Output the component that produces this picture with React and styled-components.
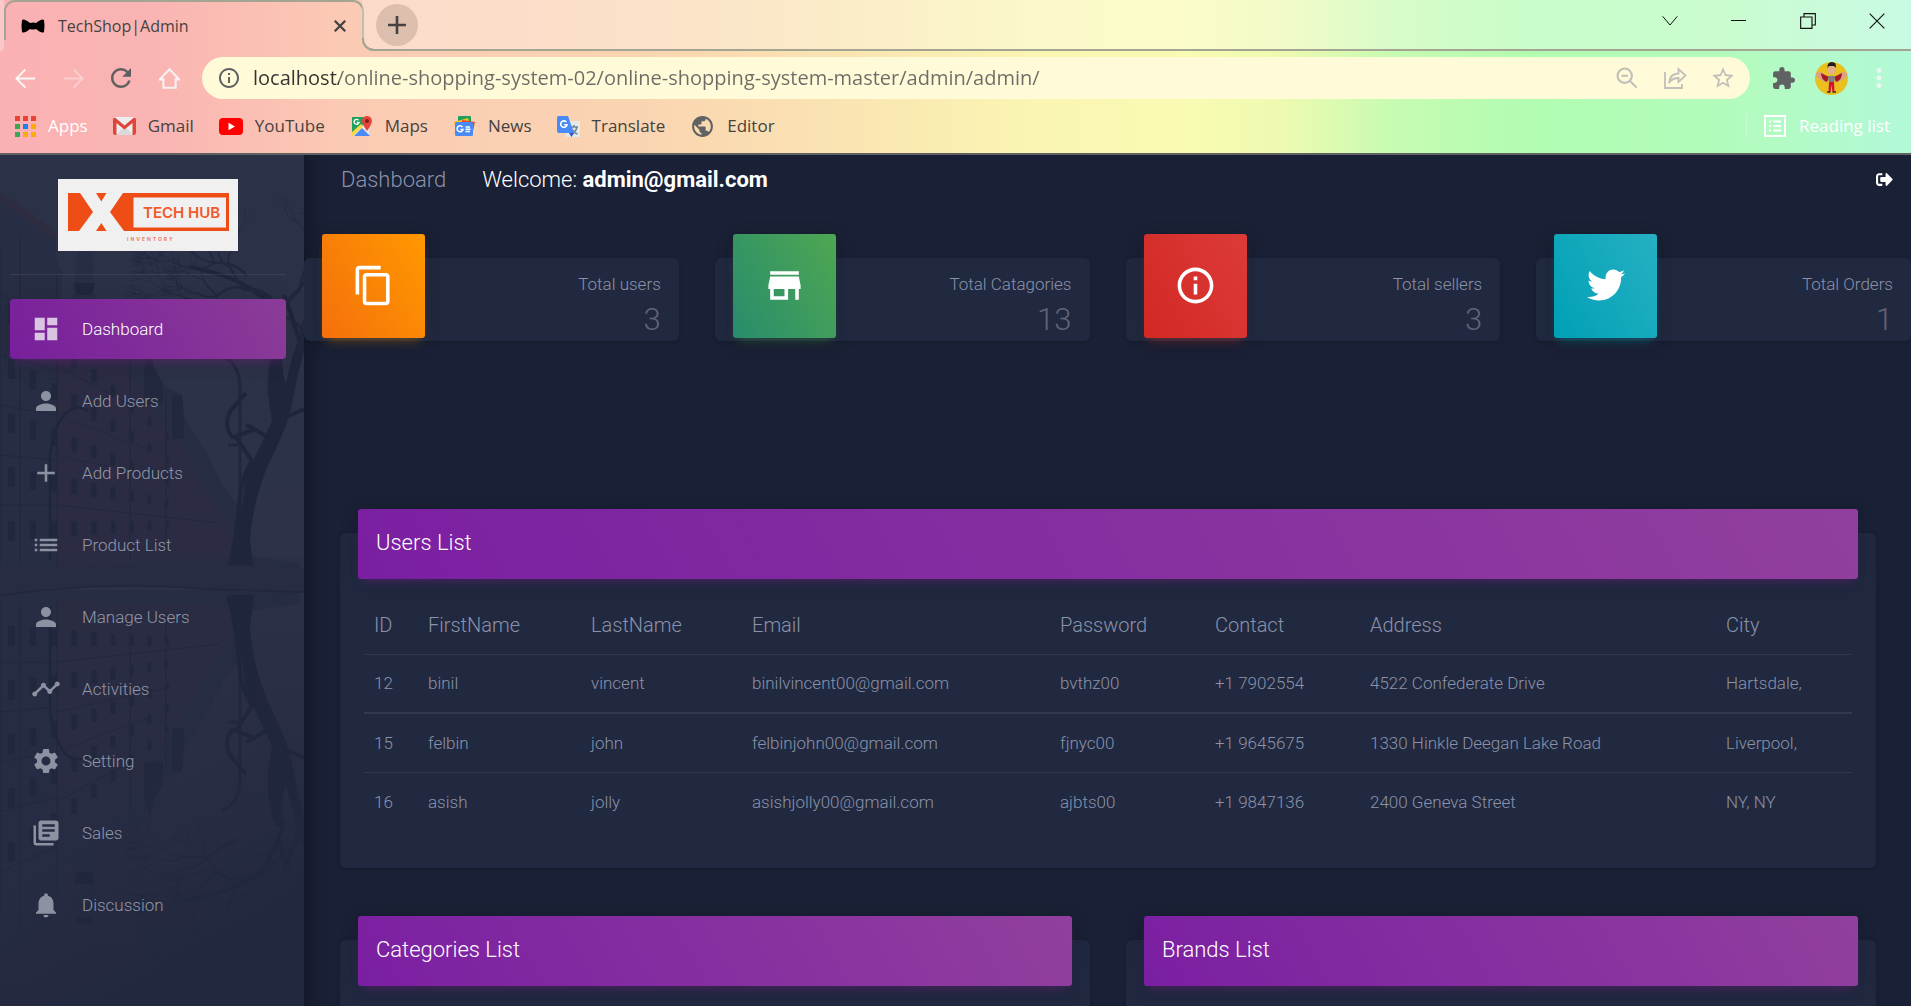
import React from "react";
import styled, { createGlobalStyle, css } from "styled-components";
import {
  MdDashboard, MdPerson, MdAdd, MdList, MdTimeline, MdSettings, MdLibraryBooks,
  MdNotifications, MdContentCopy, MdStore, MdInfoOutline, MdExtension, MdMoreVert,
  MdRefresh, MdStarBorder, MdPublic,
} from "react-icons/md";
import { FaTwitter, FaSignOutAlt } from "react-icons/fa";

const Global = createGlobalStyle`
  *, *::before, *::after { box-sizing: border-box; }
  body { margin: 0; background: #1a2035; }
  button, input { font: inherit; color: inherit; }
  button { background: none; border: 0; padding: 0; display: grid; place-items: center; }
  a { color: inherit; text-decoration: none; }
  svg { display: block; flex: none; }
`;

const ui = `"Open Sans", "Noto Sans", sans-serif`;
const line = "#a3a491";

const Shell = styled.div`
  height: 100vh;
  display: flex;
  flex-direction: column;
  overflow: hidden;
  font-family: Roboto, "Liberation Sans", sans-serif;
`;

/* ---------- browser frame ---------- */

const Browser = styled.header`
  flex: none;
  font-family: ${ui};
  color: #45423f;
  border-bottom: 2px solid #5f6163;
  background: linear-gradient(90deg, #fab1b3 0%, #fab4b3 8%, #fbcab4 18%, #fad5b1 34%, #fae4b2 44%,
    #faf5b2 54%, #f9fbb2 62%, #eefab0 67%, #c6fbb2 73%, #b2fcb2 80%, #b3fbbb 90%, #b2f9d8 100%);
`;

const TabStrip = styled.div`
  height: 51px;
  display: flex;
  align-items: flex-start;
`;

const StripEdge = styled.div`
  width: 4px;
  height: 51px;
  background: rgba(255, 255, 255, 0.3);
  border-bottom-right-radius: 12px;
`;

const Tab = styled.div`
  width: 360px;
  height: 40px;
  padding: 9px 15px 0 15px;
  display: flex;
  align-items: center;
  gap: 13px;
  border: 2px solid ${line};
  border-bottom: 0;
  border-radius: 11px 11px 0 0;
  font-size: 16px;
  line-height: 24px;
`;

const TabTitle = styled.span`
  flex: 1;
`;

const StripRest = styled.div`
  position: relative;
  flex: 1;
  height: 51px;
  margin-left: -2px;
  padding: 0 0 8px 14px;
  display: flex;
  align-items: center;
  background: rgba(255, 255, 255, 0.3);
  border-bottom: 2px solid ${line};
  border-bottom-left-radius: 12px;

  &::before {
    content: "";
    position: absolute;
    left: 0;
    bottom: -2px;
    width: 12px;
    height: 13px;
    border-left: 2px solid ${line};
    border-bottom: 2px solid ${line};
    border-bottom-left-radius: 12px;
  }
`;

const NewTab = styled.button`
  width: 42px;
  height: 42px;
  margin-top: 8px;
  border-radius: 50%;
  background: rgba(165, 140, 125, 0.36);
`;

const WindowControls = styled.div`
  display: flex;
  margin-left: auto;
`;

const WindowButton = styled.button`
  width: 69px;
  height: 42px;
  color: #111;
`;

const Toolbar = styled.div`
  display: flex;
  align-items: center;
  height: 54px;
`;

const ToolButton = styled.button`
  width: 48px;
  height: 42px;
  color: ${(p) => p.$color || "#5f5f5f"};
`;

const NavButtons = styled.div`
  display: flex;
  width: 202px;
  padding-left: 1px;
`;

const Omnibox = styled.div`
  flex: 1;
  height: 42px;
  display: flex;
  align-items: center;
  padding-left: 15px;
  padding-right: 3px;
  border-radius: 21px;
  background: #fffbd9;
`;

const Address = styled.input`
  flex: 1;
  min-width: 0;
  margin-left: 12px;
  padding: 0;
  border: 0;
  outline: 0;
  font-size: 20px;
  line-height: 32px;
  color: #6d6b66;
  background: linear-gradient(90deg, #33322f 0 86px, #6d6b66 86px);
  -webkit-background-clip: text;
  background-clip: text;
  -webkit-text-fill-color: transparent;
`;

const ExtensionRow = styled.div`
  display: flex;
  padding: 0 8px 0 9px;
`;

const Avatar = styled.svg`
  border-radius: 50%;
`;

const Bookmarks = styled.nav`
  display: flex;
  align-items: center;
  gap: 25px;
  height: 48px;
  padding: 0 21px 6px 14px;
  font-size: 17px;
  line-height: 24px;
`;

const Bookmark = styled.a`
  display: flex;
  align-items: center;
  gap: 12px;
  color: ${(p) => (p.$light ? "#fff" : "inherit")};
  ${(p) => p.$end && css`
    margin-left: auto;
    padding-left: 16px;
    border-left: 1px solid rgba(255, 255, 255, 0.3);
  `}
`;

/* ---------- page ---------- */

const Page = styled.div`
  flex: 1;
  min-height: 0;
  display: flex;
  background: #1a2035;
`;

const Sidebar = styled.aside`
  position: relative;
  z-index: 0;
  flex: none;
  width: 304px;
  overflow: hidden;
  padding: 24px 18px 0 10px;
  background: #242a41;
`;

const Scene = styled.svg`
  position: absolute;
  inset: 0;
  z-index: -1;
  width: 100%;
  height: 100%;
`;

const Brand = styled.a`
  display: flex;
  justify-content: center;
  padding-bottom: 23px;
  border-bottom: 1px solid rgba(180, 180, 180, 0.12);
`;

const Menu = styled.nav`
  display: flex;
  flex-direction: column;
  gap: 12px;
  padding-top: 24px;
`;

const MenuLink = styled.a`
  display: flex;
  align-items: center;
  gap: 21px;
  height: 60px;
  padding-left: 21px;
  border-radius: 4px;
  font-size: 17px;
  font-weight: 300;
  line-height: 36px;
  color: ${(p) => (p.$active ? "#fff" : "#9297a8")};
  ${(p) => p.$active && css`
    background: linear-gradient(60deg, #781f9c, #8b3c97);
    box-shadow: 0 4px 20px 0 rgba(0, 0, 0, 0.14), 0 7px 10px -5px rgba(156, 39, 176, 0.4);
  `}

  svg { color: ${(p) => (p.$active ? "#d9c5e2" : "#8d92a3")}; }
`;

const Main = styled.main`
  flex: 1;
  min-width: 0;
  overflow-y: auto;
  scrollbar-width: none;
  color: #8b92a9;
  box-shadow: inset 18px 0 18px -14px rgba(0, 0, 0, 0.3);
`;

const TopBar = styled.div`
  display: flex;
  align-items: center;
  gap: 36px;
  height: 49px;
  padding: 0 18px 0 37px;
  font-size: 22px;
  font-weight: 300;
  line-height: 30px;
  color: #8b92a9;
`;

const Welcome = styled.span`
  color: #fff;
  b { font-weight: 700; }
`;

const LogoutButton = styled.button`
  margin-left: auto;
  color: #fff;
`;

const Stats = styled.section`
  display: grid;
  grid-template-columns: repeat(4, 1fr);
  gap: 36px;
  padding-top: 54px;
`;

const surface = css`
  background: #202940;
  border-radius: 6px;
  box-shadow: 0 1px 4px 0 rgba(0, 0, 0, 0.14);
`;

const StatCard = styled.article`
  ${surface}
  display: flex;
  justify-content: space-between;
  height: 83px;
  padding: 0 18px;
`;

const StatIcon = styled.div`
  display: grid;
  place-items: center;
  width: 103px;
  height: 104px;
  margin-top: -24px;
  padding-bottom: 2px;
  border-radius: 3px;
  color: #fff;
  background: linear-gradient(60deg, ${(p) => p.$from}, ${(p) => p.$to});
  box-shadow: 0 4px 20px 0 rgba(0, 0, 0, 0.14), 0 7px 10px -5px ${(p) => p.$glow};
`;

const StatText = styled.div`
  padding-top: 11px;
  text-align: right;
  font-weight: 300;
`;

const StatLabel = styled.p`
  margin: 0;
  font-size: 17px;
  line-height: 30px;
`;

const StatValue = styled.h3`
  margin: 0;
  font-size: 31px;
  font-weight: 300;
  line-height: 42px;
  color: #606477;
`;

const Lists = styled.section`
  display: grid;
  grid-template-columns: 1fr 1fr;
  gap: 72px 36px;
  padding: 192px 35px 36px 36px;
`;

const Panel = styled.article`
  ${surface}
  grid-column: ${(p) => (p.$wide ? "1 / -1" : "auto")};
  min-height: 240px;
  padding: 0 18px 37px;
`;

const PanelHeader = styled.h4`
  height: 70px;
  margin: -24px 0 0;
  padding: 18px;
  border-radius: 3px;
  font-size: 22px;
  font-weight: 300;
  line-height: 32px;
  color: #fff;
  background: linear-gradient(60deg, #7b1fa2, #913f9e);
  box-shadow: 0 4px 20px 0 rgba(0, 0, 0, 0.14), 0 7px 10px -5px rgba(156, 39, 176, 0.4);
`;

const TableArea = styled.div`
  padding: 17px 6px 0;
`;

const Table = styled.table`
  width: 100%;
  table-layout: fixed;
  border-collapse: collapse;
  font-weight: 300;

  th, td {
    padding: 0 10px;
    text-align: left;
    white-space: nowrap;
    font-weight: 300;
  }
  th { height: 58px; font-size: 20px; }
  td { height: 59px; font-size: 17px; border-top: 1px solid #313951; }
  tbody tr:nth-child(2) td { border-top-width: 2px; }
`;

/* ---------- drawings ---------- */

const Stroke = ({ size = 24, w = 2, children }) => (
  <svg width={size} height={size} viewBox="0 0 24 24" fill="none" stroke="currentColor" strokeWidth={w}>{children}</svg>
);

const BowTie = () => (
  <svg width="24" height="16" viewBox="0 0 24 16" fill="#000">
    <path d="M1 2Q3 0 9 5Q12 4 15 5Q21 0 23 2Q24 8 23 14Q21 16 15 11Q12 12 9 11Q3 16 1 14Q0 8 1 2Z" />
  </svg>
);

const AppsGrid = () => {
  const colors = ["#ea4335", "#ea4335", "#ea4335", "#34a853", "#1a83f0", "#fbab04", "#34a853", "#fbab04", "#fbab04"];
  return (
    <svg width="22" height="22" viewBox="0 0 22 22">
      {colors.map((c, i) => (
        <rect key={i} x={1 + (i % 3) * 8} y={1 + Math.floor(i / 3) * 8} width="5" height="5" fill={c} />
      ))}
    </svg>
  );
};

const Gmail = () => (
  <svg width="23" height="18" viewBox="0 0 23 18">
    <rect width="23" height="18" rx="2" fill="#ededed" />
    <path d="M3 18L11.500 9L20 18Z" fill="#d8d8d8" />
    <path d="M0 2.500Q0 .5 2 .5L11.500 8.500L21 .5Q23 .5 23 2.500V16Q23 18 21 18H19.500V6L11.500 12.500L3.500 6V18H2Q0 18 0 16Z" fill="#e0443a" />
  </svg>
);

const YouTube = () => (
  <svg width="24" height="17" viewBox="0 0 24 17">
    <rect width="24" height="17" rx="4" fill="#f00" />
    <path d="M9.500 4.800L16 8.500L9.500 12.200Z" fill="#fff" />
  </svg>
);

const Maps = () => (
  <svg width="23" height="23" viewBox="0 0 23 23">
    <path d="M2 2H19V21H2Z" fill="#e8e8e8" />
    <path d="M2 2H17L13 10L2 19Z" fill="#1fa15d" />
    <path d="M2 17L11 9L13 11L3 21H2Z" fill="#fdd63b" />
    <path d="M4 21L12 13L20 21Z" fill="#4a8af4" />
    <path d="M17 1A5 5 0 0 1 22 6Q22 9 17 16Q12 9 12 6A5 5 0 0 1 17 1Z" fill="#e5443a" />
    <circle cx="17" cy="6" r="2" fill="#7c1f19" />
    <path d="M8.500 5.200A2.500 2.500 0 1 0 9 7.500H6.800" fill="none" stroke="#fff" strokeWidth="1.300" />
  </svg>
);

const News = () => (
  <svg width="23" height="22" viewBox="0 0 23 22">
    <rect x="5" y="1" width="13" height="10" rx="1" fill="#1fa15d" />
    <path d="M1 7L15 3L17 10L3 15Z" fill="#fdbf10" />
    <path d="M9 5L22 7L20 16L8 14Z" fill="#e5443a" />
    <rect x="2" y="7" width="18" height="14" rx="1.500" fill="#4a8af4" />
    <path d="M9.500 12A3 3 0 1 0 10 14.500H7.500M12.500 12H17M12.500 14.300H17.500M12.500 16.600H17" fill="none" stroke="#fff" strokeWidth="1.500" />
  </svg>
);

const Translate = () => (
  <svg width="23" height="23" viewBox="0 0 23 23">
    <rect x="9" y="6" width="14" height="16" rx="1" fill="#e6e8ea" />
    <path d="M13 12H21M17 10V12M20 12Q19 17 14 19M15 14Q17 18 20.500 19" stroke="#6d8799" strokeWidth="1.500" fill="none" />
    <path d="M1.500 1H11L17 18H2Q0 18 0 16V3Q0 1 1.500 1Z" fill="#4a8af4" />
    <path d="M12 18H17L14.500 22Z" fill="#2b56c4" />
    <path d="M9.300 7A3.200 3.200 0 1 0 10 9.800H7.200" fill="none" stroke="#fff" strokeWidth="1.600" />
  </svg>
);

const ReadingIcon = () => (
  <Stroke size={24} w={2}>
    <path d="M2 2H22V22H2Z" />
    <path d="M6 7.500H8M10 7.500H18M6 12H8M10 12H18M6 16.500H8M10 16.500H18" />
  </Stroke>
);

const AvatarPicture = () => (
  <Avatar width="33" height="33" viewBox="0 0 33 33">
    <rect width="33" height="33" fill="#eac01f" />
    <path d="M0 12Q4 8 9 12L14 18L11 20Q3 18 0 12Z" fill="#d9a38b" />
    <path d="M33 12Q29 8 24 12L19 18L22 20Q30 18 33 12Z" fill="#d9a38b" />
    <path d="M6 11L14 15L12 20Q6 18 6 11Z" fill="#a81a20" />
    <path d="M27 11L19 15L21 20Q27 18 27 11Z" fill="#a81a20" />
    <path d="M13 14H20L19 21H14Z" fill="#7b7f86" />
    <path d="M14 20H19L19.500 30H17.500L16.500 23L15.500 30H13.500Z" fill="#d3122f" />
    <ellipse cx="16.500" cy="8" rx="3.500" ry="4.500" fill="#e2ae93" />
    <path d="M12.500 6Q12 0 17 0Q22 0 20.500 6L19 4H14Z" fill="#231c1a" />
    <path d="M12 30H15.500M17.500 30H21" stroke="#333" strokeWidth="1.500" />
  </Avatar>
);

const Logo = () => (
  <svg width="180" height="72" viewBox="0 0 180 72" role="img" aria-label="Tech Hub Inventory">
    <rect width="180" height="72" fill="#f1f0f1" />
    <g fill="#ee4e16">
      <path d="M10 14H22L35 33L21 52H10Z" />
      <path d="M38 14H48.500L43.300 22.500Z" />
      <path d="M38 52H48.500L43.300 44Z" />
      <path fillRule="evenodd" d="M65 14H171V52H66L52 33ZM75.500 18.500V48.500H168V18.500Z" />
      <text x="85" y="39" fontFamily="Inter, sans-serif" fontWeight="600" fontSize="15" fill="#f0592a">TECH HUB</text>
      <text x="69" y="62" fontFamily="Inter, sans-serif" fontWeight="700" fontSize="5" letterSpacing="2" fill="#ea7f66">INVENTORY</text>
    </g>
  </svg>
);

/* Bare branches are grown recursively; the same seed always gives the same tree. */
function growBranches(x, y, angle, length, width, depth, out, rand) {
  if (depth === 0) return;
  const bend = (rand() - 0.5) * 0.7;
  const x2 = x + Math.cos(angle + bend) * length;
  const y2 = y + Math.sin(angle + bend) * length;
  const cx = x + Math.cos(angle - bend) * length * 0.5;
  const cy = y + Math.sin(angle - bend) * length * 0.5;
  out.push({ d: `M${x.toFixed(1)} ${y.toFixed(1)}Q${cx.toFixed(1)} ${cy.toFixed(1)} ${x2.toFixed(1)} ${y2.toFixed(1)}`, w: width });
  const forks = rand() > 0.5 ? 3 : 2;
  for (let i = 0; i < forks; i += 1) {
    growBranches(x2, y2, angle + bend + (i - (forks - 1) / 2) * 0.65 + (rand() - 0.5) * 0.4,
      length * 0.78, width * 0.62, depth - 1, out, rand);
  }
}

function makeTree() {
  let seed = 11;
  const rand = () => {
    seed = (seed * 16807) % 2147483647;
    return seed / 2147483647;
  };
  const out = [];
  growBranches(274, 150, -2.300, 34, 4, 6, out, rand);
  growBranches(280, 170, -1.300, 40, 4, 6, out, rand);
  growBranches(238, 172, -2.700, 34, 2.500, 6, out, rand);
  growBranches(246, 120, -2.500, 34, 2.500, 6, out, rand);
  growBranches(296, 205, -1.200, 30, 3, 4, out, rand);
  return out;
}

const tree = makeTree();
const windows = [];
for (let c = 0; c < 9; c += 1) {
  for (let r = 0; r < 5; r += 1) {
    windows.push({ x: 8 + c * 22 - c * c * 0.3, y: 150 + c * 16 + r * (54 - c * 4), h: 20 - c * 1.5, w: 7 - c * 0.4 });
  }
}

const Bank = () => (
  <g>
    <path d="M0 38L22 52L56 78V104L62 116V150L72 148L74 128L76 110L78 88L82 76L85 60L88 76L92 88L94 128L96 148L98 168L144 190L150 215L155 215L163 228L166 232L182 240L184 262L208 300L222 330L238 350V400L300 408V422H0Z" fill="#262d44" />
    <path d="M0 38L22 52L56 78L52 84L0 46Z" fill="#2f2b3f" />
    <path d="M54 190L98 168L144 240L180 290L236 385V405L54 412Z" fill="#2b2c42" />
    <path d="M74 128H95L92 140H77ZM77 88H92V94H77Z" fill="#1c2439" />
    <path d="M144 214L150 194L155 215L163 228V250H144Z" fill="#1f273d" />
    <path d="M172 240H182L184 262V284H172Z" fill="#1f273d" />
    <path d="M0 90V410M20 80V410M57 120V412M130 200V405M166 240V400" stroke="#1d253a" strokeWidth="1" />
    <path d="M0 140L56 165M0 200L56 215M56 210L140 255M56 260L150 295M56 300L170 325M0 250L56 260M56 350L220 368M0 300L56 305M0 350H56" stroke="#1e263c" strokeWidth="1" fill="none" />
    {windows.map((w, i) => <rect key={i} x={w.x} y={w.y} width={w.w} height={w.h} fill="#1e263c" />)}
    <path d="M50 405V300Q54 270 66 258Q76 248 88 256" fill="none" stroke="#1b2338" strokeWidth="2.500" />
    <path d="M240 415V230Q238 206 222 202M238 290H228" stroke="#1d253b" strokeWidth="3" fill="none" />
    <path d="M228 416Q236 390 239 350Q241 322 252 306L236 282H232Q222 268 232 254L246 238M236 281L256 274" fill="none" stroke="#1b2338" strokeWidth="4" />
    <path d="M229 417Q242 360 246 320Q258 296 272 266L268 240Q266 210 276 185H284Q280 215 286 228Q292 200 300 180L304 178V196Q296 225 292 250Q286 275 268 310Q252 350 250 385L254 417Z" fill="#1b2338" />
    <path d="M284 190Q276 160 262 142Q240 122 190 112M300 188Q292 160 284 140M286 262L304 254M270 284Q252 272 246 270" fill="none" stroke="#1b2338" strokeWidth="4" />
    <g fill="none" stroke="#1d253b" strokeLinecap="round">
      {tree.map((b, i) => <path key={i} d={b.d} strokeWidth={Math.max(b.w, 0.5)} />)}
    </g>
  </g>
);

const StreetScene = () => (
  <Scene viewBox="0 0 304 851" preserveAspectRatio="xMidYMin slice" aria-hidden="true">
    <defs>
      <linearGradient id="sky" x1="0" y1="0" x2="0" y2="1">
        <stop offset="0" stopColor="#2b344a" />
        <stop offset="0.5" stopColor="#2e344a" />
        <stop offset="1" stopColor="#2a2a41" />
      </linearGradient>
      <linearGradient id="dusk" x1="0" y1="0" x2="0.400" y2="1">
        <stop offset="0" stopColor="#1e273d" stopOpacity="0" />
        <stop offset="0.600" stopColor="#1e273d" stopOpacity="0.200" />
        <stop offset="1" stopColor="#1d273c" stopOpacity="0.900" />
      </linearGradient>
    </defs>
    <rect width="304" height="851" fill="url(#sky)" />
    <Bank />
    <g transform="translate(0 857) scale(1 -1)"><Bank /></g>
    <path d="M0 415Q150 405 304 413V436Q180 432 90 432L0 442Z" fill="#272c43" />
    <path d="M0 440Q120 425 200 434L304 437" stroke="#1e253a" strokeWidth="2" fill="none" />
    <rect y="400" width="304" height="451" fill="url(#dusk)" />
    <rect width="304" height="851" fill="#2a3047" opacity="0.300" />
  </Scene>
);

/* ---------- data ---------- */

const bookmarks = [
  ["Gmail", Gmail], ["YouTube", YouTube], ["Maps", Maps], ["News", News], ["Translate", Translate],
  ["Editor", () => <MdPublic size={25} color="#5f6163" />],
];

const menu = [
  ["Dashboard", MdDashboard], ["Add Users", MdPerson], ["Add Products", MdAdd], ["Product List", MdList],
  ["Manage Users", MdPerson], ["Activities", MdTimeline], ["Setting", MdSettings], ["Sales", MdLibraryBooks],
  ["Discussion", MdNotifications],
];

const stats = [
  { label: "Total users", value: 3, Icon: MdContentCopy, size: 43, from: "#f5700c", to: "#ff9800", glow: "rgba(255,152,0,.4)" },
  { label: "Total Catagories", value: 13, Icon: MdStore, size: 43, from: "#288c6c", to: "#4ea752", glow: "rgba(76,175,80,.4)" },
  { label: "Total sellers", value: 3, Icon: MdInfoOutline, size: 43, from: "#d22824", to: "#dc3b38", glow: "rgba(244,67,54,.4)" },
  { label: "Total Orders", value: 1, Icon: FaTwitter, size: 38, from: "#00a0b5", to: "#26b0c3", glow: "rgba(0,188,212,.4)" },
];

const columns = [["ID", 54], ["FirstName", 163], ["LastName", 161], ["Email", 308], ["Password", 155], ["Contact", 155], ["Address", 356], ["City", 136]];

const users = [
  ["12", "binil", "vincent", "binilvincent00@gmail.com", "bvthz00", "+1 7902554", "4522 Confederate Drive", "Hartsdale,"],
  ["15", "felbin", "john", "felbinjohn00@gmail.com", "fjnyc00", "+1 9645675", "1330 Hinkle Deegan Lake Road", "Liverpool,"],
  ["16", "asish", "jolly", "asishjolly00@gmail.com", "ajbts00", "+1 9847136", "2400 Geneva Street", "NY, NY"],
];

export default function App() {
  return (
    <Shell>
      <Global />
      <Browser>
        <TabStrip>
          <StripEdge />
          <Tab>
            <BowTie />
            <TabTitle>TechShop|Admin</TabTitle>
            <button aria-label="Close tab"><Stroke size={14} w={4}><path d="M3 3L21 21M21 3L3 21" /></Stroke></button>
          </Tab>
          <StripRest>
            <NewTab aria-label="New tab"><Stroke size={18} w={3.5}><path d="M12 0V24M0 12H24" /></Stroke></NewTab>
            <WindowControls>
              <WindowButton aria-label="Search tabs"><Stroke size={16} w={1.5}><path d="M1 5L12 18L23 5" /></Stroke></WindowButton>
              <WindowButton aria-label="Minimize"><Stroke size={15} w={1.7}><path d="M0 12H24" /></Stroke></WindowButton>
              <WindowButton aria-label="Restore"><Stroke size={16} w={1.7}><path d="M1 6H18V23H1ZM6 6V1H23V18H18" /></Stroke></WindowButton>
              <WindowButton aria-label="Close window"><Stroke size={16} w={1.7}><path d="M1 1L23 23M23 1L1 23" /></Stroke></WindowButton>
            </WindowControls>
          </StripRest>
        </TabStrip>
        <Toolbar>
          <NavButtons>
            <ToolButton aria-label="Back" $color="#fdf6f6"><Stroke size={21} w={2.2}><path d="M23 12H2M12 1.500L1.500 12L12 22.500" /></Stroke></ToolButton>
            <ToolButton aria-label="Forward" $color="#fbcfd0"><Stroke size={21} w={2.2}><path d="M1 12H22M12 1.500L22.500 12L12 22.500" /></Stroke></ToolButton>
            <ToolButton aria-label="Reload"><MdRefresh size={30} /></ToolButton>
            <ToolButton aria-label="Home" $color="#f6f1f3"><Stroke size={21} w={2.4}><path d="M1 13L12 1.500L23 13H19V22.500H5V13Z" /></Stroke></ToolButton>
          </NavButtons>
          <Omnibox>
            <MdInfoOutline size={24} color="#5f6163" />
            <Address aria-label="Address" defaultValue="localhost/online-shopping-system-02/online-shopping-system-master/admin/admin/" />
            <ToolButton aria-label="Zoom" $color="#c1bfb9">
              <Stroke size={22} w={2.3}><circle cx="9.500" cy="9.500" r="7.800" /><path d="M6 9.500H13M15 15L22.500 22.500" /></Stroke>
            </ToolButton>
            <ToolButton aria-label="Share" $color="#c1bfb9">
              <Stroke size={24} w={1.8}><path d="M2 6V22H19V18M6 17Q7 7.500 15.500 7.500V3L22.500 9.500L15.500 16V12Q9 12 6 17Z" /></Stroke>
            </ToolButton>
            <ToolButton aria-label="Bookmark this page" $color="#c1bfb9"><MdStarBorder size={26} /></ToolButton>
          </Omnibox>
          <ExtensionRow>
            <ToolButton aria-label="Extensions" $color="#5f6163"><MdExtension size={25} /></ToolButton>
            <ToolButton aria-label="Profile"><AvatarPicture /></ToolButton>
            <ToolButton aria-label="Menu" $color="#eef5f1"><MdMoreVert size={30} /></ToolButton>
          </ExtensionRow>
        </Toolbar>
        <Bookmarks aria-label="Bookmarks">
          <Bookmark href="#apps" $light><AppsGrid />Apps</Bookmark>
          {bookmarks.map(([name, Icon]) => (
            <Bookmark key={name} href={`#${name}`}><Icon />{name}</Bookmark>
          ))}
          <Bookmark href="#reading" $light $end><ReadingIcon />Reading list</Bookmark>
        </Bookmarks>
      </Browser>

      <Page>
        <Sidebar>
          <StreetScene />
          <Brand href="#home"><Logo /></Brand>
          <Menu aria-label="Main">
            {menu.map(([name, Icon], i) => (
              <MenuLink key={name} href={`#${name}`} $active={i === 0}><Icon size={30} />{name}</MenuLink>
            ))}
          </Menu>
        </Sidebar>

        <Main>
          <TopBar>
            <a href="#dashboard">Dashboard</a>
            <Welcome>Welcome: <b>admin@gmail.com</b></Welcome>
            <LogoutButton aria-label="Log out"><FaSignOutAlt size={17} /></LogoutButton>
          </TopBar>

          <Stats>
            {stats.map(({ label, value, Icon, size, from, to, glow }) => (
              <StatCard key={label}>
                <StatIcon $from={from} $to={to} $glow={glow}><Icon size={size} /></StatIcon>
                <StatText>
                  <StatLabel>{label}</StatLabel>
                  <StatValue>{value}</StatValue>
                </StatText>
              </StatCard>
            ))}
          </Stats>

          <Lists>
            <Panel $wide>
              <PanelHeader>Users List</PanelHeader>
              <TableArea>
                <Table>
                  <colgroup>
                    {columns.map(([name, width]) => <col key={name} width={width} />)}
                  </colgroup>
                  <thead>
                    <tr>{columns.map(([name]) => <th key={name} scope="col">{name}</th>)}</tr>
                  </thead>
                  <tbody>
                    {users.map((row) => (
                      <tr key={row[0]}>{row.map((cell, i) => <td key={i}>{cell}</td>)}</tr>
                    ))}
                  </tbody>
                </Table>
              </TableArea>
            </Panel>
            <Panel><PanelHeader>Categories List</PanelHeader></Panel>
            <Panel><PanelHeader>Brands List</PanelHeader></Panel>
          </Lists>
        </Main>
      </Page>
    </Shell>
  );
}
